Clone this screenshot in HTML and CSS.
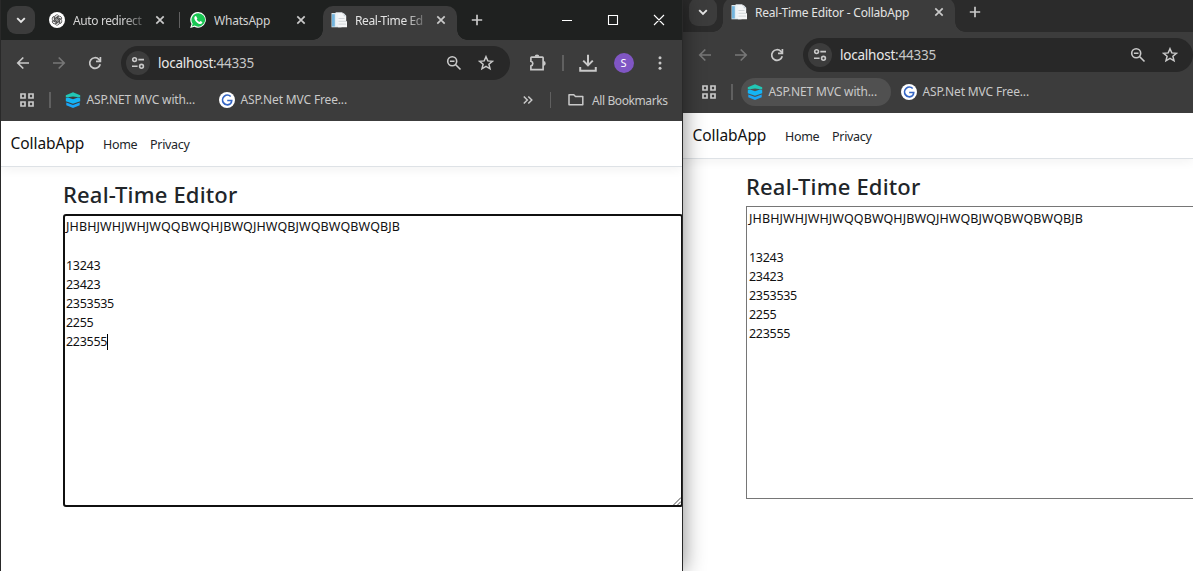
FILE: index.html
```html
<!DOCTYPE html>
<html lang="en">
<head>
<meta charset="utf-8">
<title>Real-Time Editor - CollabApp</title>
<link rel="stylesheet" href="styles.css">
</head>
<body>
<svg class="defs" width="0" height="0" aria-hidden="true">
  <symbol id="chevron" viewBox="0 0 16 16"><path d="M4.2 6.2 8 10l3.8-3.8" fill="none" stroke="currentColor" stroke-width="1.9"/></symbol>
  <symbol id="close" viewBox="0 0 16 16"><path d="m4.3 4.3 7.4 7.4m0-7.4-7.4 7.4" fill="none" stroke="currentColor" stroke-width="1.7"/></symbol>
  <symbol id="plus" viewBox="0 0 16 16"><path d="M8 2.8v10.4M2.8 8h10.4" fill="none" stroke="currentColor" stroke-width="1.7"/></symbol>
  <symbol id="back" viewBox="0 0 16 16"><path d="M14 8H3m5.3-5.5L2.8 8l5.5 5.5" fill="none" stroke="currentColor" stroke-width="1.7"/></symbol>
  <symbol id="forward" viewBox="0 0 16 16"><path d="M2 8h11M7.7 2.500 13.2 8l-5.500 5.500" fill="none" stroke="currentColor" stroke-width="1.7"/></symbol>
  <symbol id="reload" viewBox="0 0 16 16"><path d="M13.200 9.200A5.300 5.300 0 1 1 11.900 4.400l1.200 1.300" fill="none" stroke="currentColor" stroke-width="1.700"/><path d="M13.400 2v4.400H9" fill="none" stroke="currentColor" stroke-width="1.700"/></symbol>
  <symbol id="tune" viewBox="0 0 16 16"><g fill="none" stroke="currentColor" stroke-width="1.600"><circle cx="4.600" cy="4.600" r="1.900"/><path d="M8.300 4.600H14M2 11.300h5.600"/><circle cx="11.500" cy="11.300" r="1.900"/></g></symbol>
  <symbol id="zoomout" viewBox="0 0 16 16"><g fill="none" stroke="currentColor" stroke-width="1.600"><circle cx="6.200" cy="6.200" r="4.500"/><path d="M3.900 6.200h4.600M9.500 9.500l5 5"/></g></symbol>
  <symbol id="star" viewBox="0 0 16 16"><path d="m8 1.700 1.800 4.200 4.600.4-3.500 3 1.100 4.500L8 11.400l-4 2.400 1.100-4.500-3.500-3 4.600-.4Z" fill="none" stroke="currentColor" stroke-width="1.500"/></symbol>
  <symbol id="puzzle" viewBox="0 0 18 18"><path d="M3.200 3.700H13a.6.6 0 0 1 .6.6v10.600H2.600v-3.200a2.200 2.200 0 0 0 0-4.300V4.300a.6.6 0 0 1 .6-.6Z" fill="none" stroke="currentColor" stroke-width="1.500"/><path d="M6 3.400a2.100 2.100 0 0 1 4.200 0Zm7.800 3.800a2.100 2.100 0 0 1 0 4.300Z" fill="currentColor"/></symbol>
  <symbol id="download" viewBox="0 0 18 18"><path d="M9 1.500v9.600M4.700 6.900 9 11.200l4.300-4.300M2 12.500v3.500h14v-3.500" fill="none" stroke="currentColor" stroke-width="1.800"/></symbol>
  <symbol id="dots" viewBox="0 0 16 16"><g fill="currentColor"><circle cx="8" cy="2.700" r="1.500"/><circle cx="8" cy="8" r="1.500"/><circle cx="8" cy="13.300" r="1.500"/></g></symbol>
  <symbol id="grid" viewBox="0 0 16 16"><path d="M2 2h4v4H2zM10 2h4v4h-4zM2 10h4v4H2zM10 10h4v4h-4z" fill="none" stroke="currentColor" stroke-width="1.700"/></symbol>
  <symbol id="more" viewBox="0 0 16 16"><path d="m3.800 4.500 3.500 3.500-3.500 3.500M8.300 4.500l3.500 3.500-3.500 3.500" fill="none" stroke="currentColor" stroke-width="1.500"/></symbol>
  <symbol id="folder" viewBox="0 0 16 16"><path d="M1 2.700h4.800l1.700 1.800h7.300v8.300H1Z" fill="none" stroke="currentColor" stroke-width="1.500" stroke-linejoin="round"/></symbol>
  <symbol id="layers" viewBox="0 0 16 16"><path d="m8 .3 7.200 2.900v2.300L8 4.600.8 5.500V3.200Z" fill="#22c7b5"/><path d="M.8 6.200 3 5.400l5 1.900 5-1.900 2.200.8v3L8 11.800.8 9.200Z" fill="#14b4f5"/><path d="m1.300 10.500 6.700 2.400 6.700-2.400v2.700L8 16l-6.700-2.800Z" fill="#1aa6f8"/></symbol>
  <symbol id="gmark" viewBox="0 0 16 16"><circle cx="8" cy="8" r="8" fill="#fff"/><path d="M11.700 4.500A4.800 4.800 0 1 0 11 12c1-.7 1.700-1.800 1.700-3.500H8.200" fill="none" stroke="#3566c4" stroke-width="1.700"/></symbol>
  <symbol id="page" viewBox="0 0 16 16"><path d="M.5 1h10v14.300H.5z" fill="#dbe6ec"/><path d="M1 2.200h2.800v12.300H1z" fill="#73b5de"/><path d="M4.600.3h6.900v14H4.600z" fill="#edf3f6"/><path d="M6.900 1.300h6l2.300 2.400v5.500h.8v6H6.900z" fill="#f5f6f7"/><path d="m12.500 1.300.3 2.900h2.400" fill="#c5d1d9"/><path d="M7.500 6.500h6M7.500 9.300h7.500M7.500 12.100h7.500" stroke="#c8ced2" stroke-width=".8"/></symbol>
  <symbol id="knot" viewBox="0 0 16 16"><circle cx="8" cy="8" r="8" fill="#fff"/><g fill="none" stroke="#333" stroke-width=".7"><path id="petal" d="M5.700 9.300V5.100a2.200 2.200 0 0 1 4-1.300L6.900 5.500v3.200"/><use href="#petal" transform="rotate(60 8 8)"/><use href="#petal" transform="rotate(120 8 8)"/><use href="#petal" transform="rotate(180 8 8)"/><use href="#petal" transform="rotate(240 8 8)"/><use href="#petal" transform="rotate(300 8 8)"/></g></symbol>
  <symbol id="whatsapp" viewBox="0 0 16 16"><path d="M8.200 0a7.800 7.800 0 1 1-3.800 14.700L.2 16l1.300-4A7.800 7.800 0 0 1 8.200 0Z" fill="#fff"/><path d="M8.200 1.200a6.700 6.700 0 1 1-3.500 12.300l-2.900.9.900-2.700A6.700 6.700 0 0 1 8.200 1.200Z" fill="#19c653"/><path d="M6 4.100 5.100 4.300C3.900 5.200 4.100 7 5.500 8.900c1.500 2.100 3.400 3.200 5 3.100 1.200-.1 2-1 1.800-1.900L10.400 9l-1 .9c-1.100-.4-2.100-1.400-2.700-2.500l.7-.9Z" fill="#fff"/></symbol>
</svg>

<main class="desktop">
  <section class="window window-back">
    <div class="tabstrip">
      <span class="tab-search"><svg class="ic"><use href="#chevron"/></svg></span>
      <div class="tab tab-active tab-wide"><svg class="ic"><use href="#page"/></svg><span class="tab-title">Real-Time Editor - CollabApp</span><svg class="ic"><use href="#close"/></svg></div>
      <svg class="ic new-tab"><use href="#plus"/></svg>
    </div>
    <div class="toolbar">
      <svg class="ic dim"><use href="#back"/></svg><svg class="ic dim"><use href="#forward"/></svg><svg class="ic"><use href="#reload"/></svg>
      <div class="omnibox"><span class="site"><svg class="ic"><use href="#tune"/></svg></span><span class="url">localhost<span class="port">:44335</span></span><svg class="ic"><use href="#zoomout"/></svg><svg class="ic"><use href="#star"/></svg></div>
    </div>
    <div class="bookmarks">
      <svg class="ic"><use href="#grid"/></svg><i class="rule"></i>
      <div class="bookmark bookmark-hover"><svg class="ic"><use href="#layers"/></svg><span>ASP.NET MVC with...</span></div>
      <div class="bookmark"><svg class="ic"><use href="#gmark"/></svg><span>ASP.Net MVC Free...</span></div>
    </div>
    <div class="page">
      <nav class="navbar"><span class="brand">CollabApp</span><span class="nav-home">Home</span><span class="nav-privacy">Privacy</span></nav>
      <div class="container">
        <h1>Real-Time Editor</h1>
        <div class="editor"><p class="letters">JHBHJWHJWHJWQQBWQHJBWQJHWQBJWQBWQBWQBJB</p><p>13243</p><p>23423</p><p>2353535</p><p>2255</p><p>223555</p></div>
      </div>
    </div>
  </section>

  <section class="window window-front">
    <div class="tabstrip">
      <span class="tab-search"><svg class="ic"><use href="#chevron"/></svg></span>
      <div class="tab tab-first"><svg class="ic"><use href="#knot"/></svg><span class="tab-title fade">Auto redirect</span><svg class="ic"><use href="#close"/></svg></div>
      <i class="rule tab-rule"></i>
      <div class="tab tab-second"><svg class="ic"><use href="#whatsapp"/></svg><span class="tab-title">WhatsApp</span><svg class="ic"><use href="#close"/></svg></div>
      <div class="tab tab-active"><svg class="ic"><use href="#page"/></svg><span class="tab-title fade">Real-Time Ed</span><svg class="ic"><use href="#close"/></svg></div>
      <svg class="ic new-tab"><use href="#plus"/></svg>
      <svg class="controls" viewBox="0 0 104 12"><path d="M1 6.500h10M47.500 1.500h9v9h-9zM93 1l10 10m0-10L93 11" fill="none" stroke="#fff" stroke-width="1.100"/></svg>
    </div>
    <div class="toolbar">
      <svg class="ic"><use href="#back"/></svg><svg class="ic dim"><use href="#forward"/></svg><svg class="ic"><use href="#reload"/></svg>
      <div class="omnibox"><span class="site"><svg class="ic"><use href="#tune"/></svg></span><span class="url">localhost<span class="port">:44335</span></span><svg class="ic"><use href="#zoomout"/></svg><svg class="ic"><use href="#star"/></svg></div>
      <svg class="ic ic-lg puzzle"><use href="#puzzle"/></svg><i class="rule"></i><svg class="ic ic-lg download"><use href="#download"/></svg><span class="avatar">S</span><svg class="ic menu"><use href="#dots"/></svg>
    </div>
    <div class="bookmarks">
      <svg class="ic"><use href="#grid"/></svg><i class="rule"></i>
      <div class="bookmark"><svg class="ic"><use href="#layers"/></svg><span>ASP.NET MVC with...</span></div>
      <div class="bookmark"><svg class="ic"><use href="#gmark"/></svg><span>ASP.Net MVC Free...</span></div>
      <svg class="ic more"><use href="#more"/></svg><i class="rule"></i>
      <div class="all-bookmarks"><svg class="ic"><use href="#folder"/></svg><span>All Bookmarks</span></div>
    </div>
    <div class="page">
      <nav class="navbar"><span class="brand">CollabApp</span><span class="nav-home">Home</span><span class="nav-privacy">Privacy</span></nav>
      <div class="container">
        <h1>Real-Time Editor</h1>
        <div class="editor editor-focus"><p class="letters">JHBHJWHJWHJWQQBWQHJBWQJHWQBJWQBWQBWQBJB</p><p>13243</p><p>23423</p><p>2353535</p><p>2255</p><p>223555<i class="caret"></i></p><svg class="grip" viewBox="0 0 8 8"><path d="M.5 8 8 .5M4.500 8 8 4.500" stroke="#333" stroke-width=".9"/></svg></div>
      </div>
    </div>
  </section>
</main>
</body>
</html>
```

FILE: styles.css
```css
* { box-sizing: border-box; }
body { margin: 0; font-family: "Noto Sans", "Open Sans", sans-serif; }
svg { display: block; flex: none; }
.defs { position: absolute; }
p, h1 { margin: 0; }

.desktop { position: relative; width: 1193px; height: 571px; overflow: hidden; background: #fff; }
.window { position: absolute; background: #3c3c3c; color: #c9c9c9; font-size: 12px; }
.window-back { left: 682px; top: -8px; width: 511px; height: 579px; }
.window-front { left: 0; top: 0; width: 683px; height: 571px; border: solid #292929; border-width: 0 1px; box-shadow: 0 0 21px rgba(0, 0, 0, .48); }

.ic { width: 16px; height: 16px; }
.ic-lg { width: 20px; height: 20px; }
.dim { color: #777; }
.rule { flex: none; width: 1.500px; height: 16px; background: #606060; }

.tabstrip { display: flex; align-items: flex-end; height: 40px; background: #2b2b2b; padding-left: 7px; white-space: nowrap; }
.window-front .tabstrip { background: #1f2120; padding-left: 6px; }
.tab-search { display: flex; align-items: center; justify-content: center; width: 28px; height: 28px; margin-bottom: 6px; border-radius: 9px; background: #3c3c3c; color: #e6e6e6; }
.tab { position: relative; flex: none; display: flex; align-items: center; width: 134px; height: 34px; padding: 0 8px 6px; }
.tab-title { flex: 1; min-width: 0; margin: 2px 9px 0 8px; overflow: hidden; line-height: 18px; letter-spacing: -.2px; color: #d2d2d2; }
.fade { margin-right: 2px; letter-spacing: -.38px; -webkit-mask-image: linear-gradient(90deg, #000 66%, transparent 100%); mask-image: linear-gradient(90deg, #000 66%, transparent 100%); }
.tab-first { margin-left: 6px; width: 135px; }
.tab-rule { margin: 0 0 12px 2.500px; }
.tab-second { margin-left: 2px; width: 141px; padding-left: 8px; padding-right: 14px; }
.tab-active { border-radius: 10px 10px 0 0; background: #3c3c3c; }
.tab-active .tab-title { color: #e3e3e3; }
.tab-active::before, .tab-active::after { content: ""; position: absolute; bottom: 0; width: 10px; height: 10px; }
.tab-active::before { left: -10px; background: radial-gradient(circle at 0 0, transparent 9.500px, #3c3c3c 10px); }
.tab-active::after { right: -10px; background: radial-gradient(circle at 100% 0, transparent 9.500px, #3c3c3c 10px); }
.tab-wide { width: 232px; margin-left: 6px; }
.new-tab { margin: 0 0 12px 12px; }
.controls { width: 104px; height: 12px; margin: 0 0 14px 76px; }

.toolbar { display: flex; align-items: center; height: 46px; padding-left: 15px; }
.window-front .toolbar, .window-front .bookmarks { margin-left: -1px; }
.toolbar > .ic { margin-right: 20px; }
.toolbar > .ic:nth-child(3) { margin-right: 18px; }
.omnibox { flex: none; display: flex; align-items: center; width: 389px; height: 34px; padding: 0 16px 0 5px; border-radius: 17px; background: #282828; }
.window-back .omnibox { width: 390px; padding-right: 15px; }
.omnibox > .ic:last-child { margin-left: 16px; }
.site { display: flex; align-items: center; justify-content: center; width: 24px; height: 24px; border-radius: 50%; background: #3c3c3c; }
.url { flex: 1; margin-left: 8px; font-size: 13.500px; line-height: 20px; letter-spacing: -.22px; color: #e8e8e8; }
.port { color: #c7c7c7; }
.toolbar > .puzzle { margin: 0 14px 0 18px; }
.toolbar > .download { margin: 0 16px 0 14px; }
.avatar { width: 20px; height: 20px; border-radius: 50%; background: #8056c4; color: #fff; font-size: 11px; line-height: 20px; text-align: center; }
.toolbar > .menu { margin: 0 0 0 18px; }

.bookmarks { display: flex; align-items: center; height: 35px; padding: 0 0 7px 19px; white-space: nowrap; letter-spacing: -.15px; }
.bookmarks > .rule { margin: 0 8px 0 14px; }
.bookmark { display: flex; align-items: center; gap: 6px; width: 150px; height: 28px; margin-right: 4px; padding-left: 6px; border-radius: 14px; line-height: 18px; }
.bookmark-hover { background: #505050; }
.more { margin-left: 153px; }
.all-bookmarks { display: flex; align-items: center; gap: 8px; margin-left: 9px; letter-spacing: -.4px; }

.page { height: 458px; background: #fff; color: #212529; overflow: hidden; }
.window-front .page { height: 450px; }
.navbar { display: flex; align-items: center; height: 46px; padding-left: 10.500px; border-bottom: 1px solid #dee2e6; box-shadow: 0 3px 10px rgba(0, 0, 0, .05); letter-spacing: -.3px; }
.window-front .navbar { padding-left: 9.500px; }
.brand { width: 92.500px; padding-bottom: 1px; font-size: 15.500px; letter-spacing: -.06px; color: #111; }
.nav-home { width: 47px; padding-top: 2px; font-size: 12.500px; }
.nav-privacy { padding-top: 2px; font-size: 12.500px; }
.container { padding: 13px 0 0 64px; }
.window-front .container { padding-left: 62px; }
h1 { height: 34px; font-size: 22px; line-height: 29px; font-weight: 500; letter-spacing: .17px; }
.editor { position: relative; width: 500px; height: 293px; padding: 2px; border: 1px solid #767676; color: #111; font-size: 12.500px; line-height: 19px; }
.editor-focus { width: 620px; padding: 1px; border: 2px solid #101010; border-radius: 3px; }
.editor p { letter-spacing: -.3px; }
.editor .letters { height: 39px; letter-spacing: .11px; }
.caret { display: inline-block; width: 1px; height: 16px; vertical-align: -4px; background: #000; }
.grip { position: absolute; right: 0; bottom: 0; width: 8px; height: 8px; }
```
